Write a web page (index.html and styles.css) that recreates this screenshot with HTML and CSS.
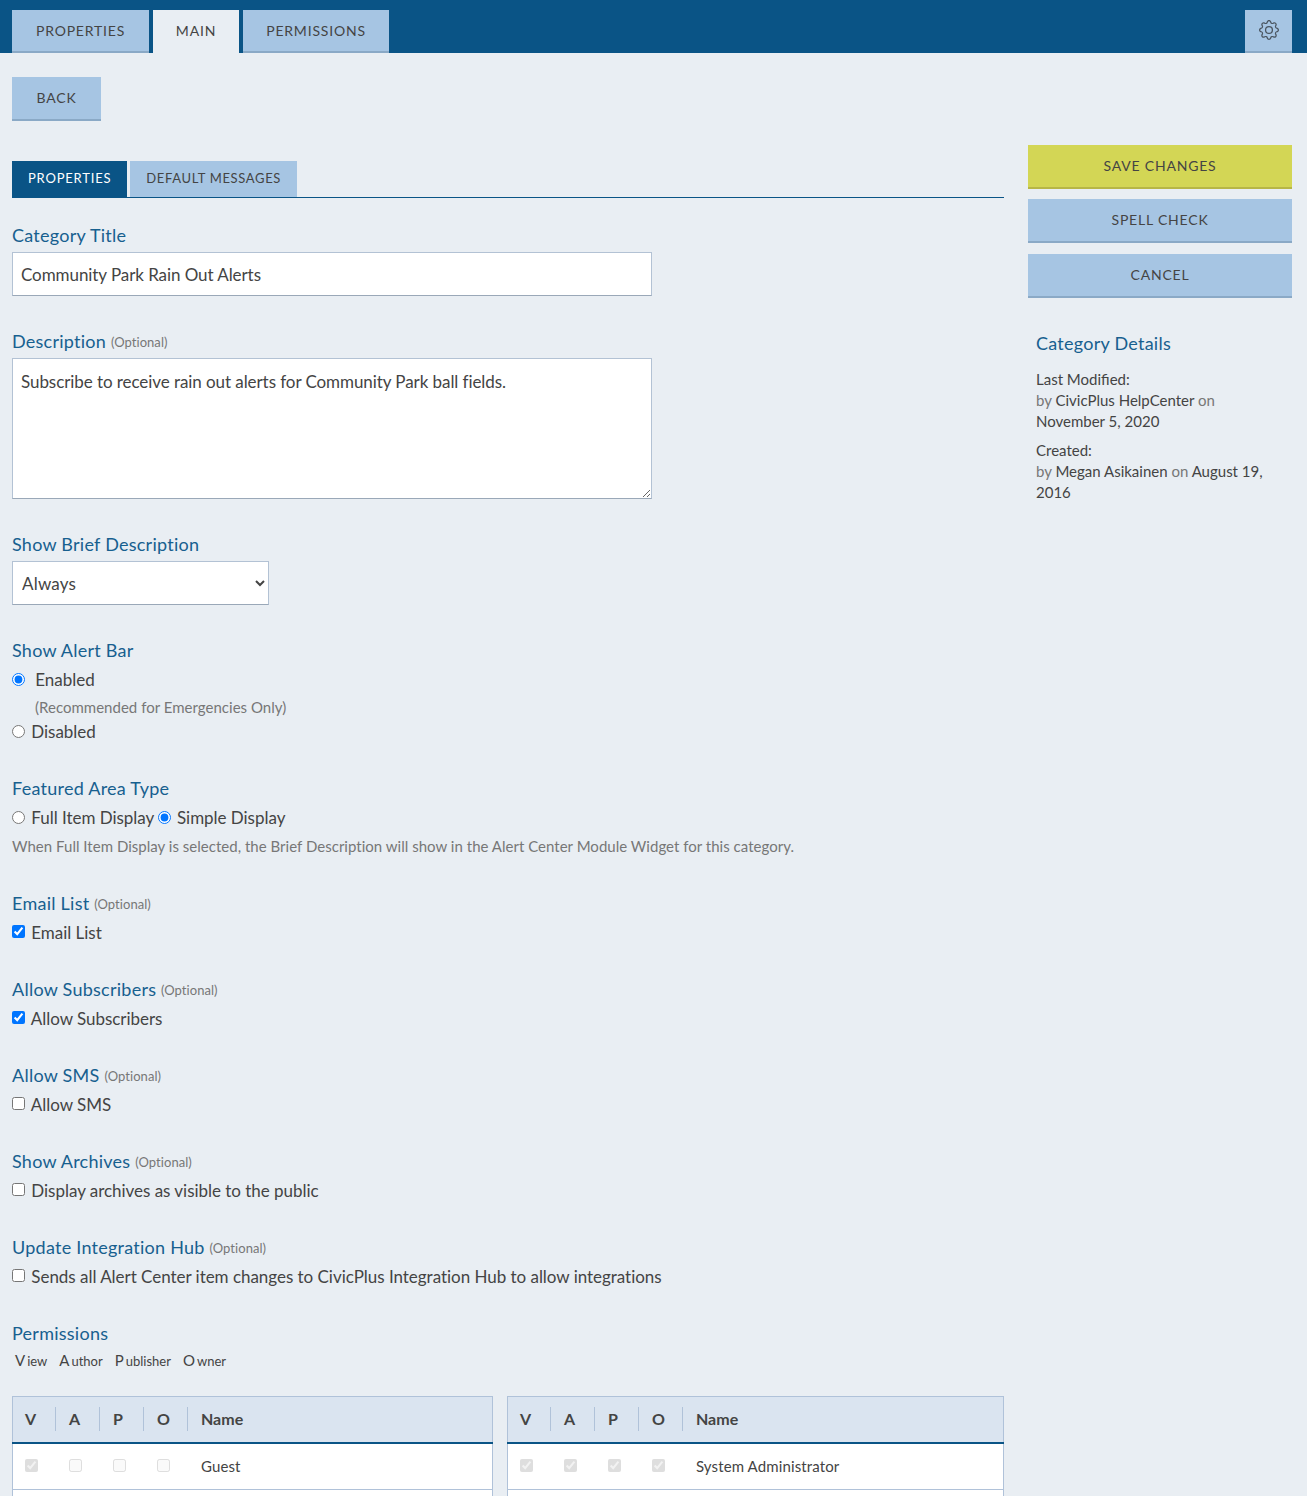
FILE: index.html
```html
<!DOCTYPE html>
<html lang="en">
<head>
    <meta charset="UTF-8">
    <meta name="viewport" content="width=device-width, initial-scale=1.0">
    <title>Alert Center Category</title>
    <link rel="stylesheet" href="styles.css">
</head>
<body>
    <header class="top-bar">
        <nav class="top-tabs">
            <a class="btn top-tab tab-properties">Properties</a>
            <a class="btn top-tab tab-main active">Main</a>
            <a class="btn top-tab tab-permissions">Permissions</a>
        </nav>
        <a class="btn settings-btn">
            <svg width="20" height="20" viewBox="0 0 16 16" fill="#4a5560">
                <path d="M8 4.754a3.246 3.246 0 1 0 0 6.492 3.246 3.246 0 0 0 0-6.492zM5.754 8a2.246 2.246 0 1 1 4.492 0 2.246 2.246 0 0 1-4.492 0z"/>
                <path d="M9.796 1.343c-.527-1.79-3.065-1.79-3.592 0l-.094.319a.873.873 0 0 1-1.255.52l-.292-.16c-1.64-.892-3.433.902-2.54 2.541l.159.292a.873.873 0 0 1-.52 1.255l-.319.094c-1.79.527-1.79 3.065 0 3.592l.319.094a.873.873 0 0 1 .52 1.255l-.16.292c-.892 1.64.901 3.434 2.541 2.54l.292-.159a.873.873 0 0 1 1.255.52l.094.319c.527 1.79 3.065 1.79 3.592 0l.094-.319a.873.873 0 0 1 1.255-.52l.292.16c1.64.893 3.434-.902 2.54-2.541l-.159-.292a.873.873 0 0 1 .52-1.255l.319-.094c1.79-.527 1.79-3.065 0-3.592l-.319-.094a.873.873 0 0 1-.52-1.255l.16-.292c.893-1.64-.902-3.433-2.541-2.54l-.292.159a.873.873 0 0 1-1.255-.52l-.094-.319zm-2.633.283c.246-.835 1.428-.835 1.674 0l.094.319a1.873 1.873 0 0 0 2.693 1.115l.291-.16c.764-.415 1.6.42 1.184 1.185l-.159.292a1.873 1.873 0 0 0 1.116 2.692l.318.094c.835.246.835 1.428 0 1.674l-.319.094a1.873 1.873 0 0 0-1.115 2.693l.16.291c.415.764-.42 1.6-1.185 1.184l-.291-.159a1.873 1.873 0 0 0-2.693 1.116l-.094.318c-.246.835-1.428.835-1.674 0l-.094-.319a1.873 1.873 0 0 0-2.692-1.115l-.292.16c-.764.415-1.6-.42-1.184-1.185l.159-.291A1.873 1.873 0 0 0 1.945 8.93l-.319-.094c-.835-.246-.835-1.428 0-1.674l.319-.094A1.873 1.873 0 0 0 3.06 4.377l-.16-.292c-.415-.764.42-1.6 1.185-1.184l.292.159a1.873 1.873 0 0 0 2.692-1.115l.094-.319z"/>
            </svg>
        </a>
    </header>

    <div class="page">
        <a class="btn back-btn">Back</a>

        <div class="columns">
            <main class="form-col">
                <div class="sub-tabs">
                    <a class="sub-tab active">Properties</a>
                    <a class="sub-tab">Default Messages</a>
                </div>

                <form>
                    <div class="field">
                        <label class="field-label" for="title">Category Title</label>
                        <input class="text-input" type="text" id="title" value="Community Park Rain Out Alerts">
                    </div>

                    <div class="field">
                        <label class="field-label" for="description">Description <small>(Optional)</small></label>
                        <textarea class="text-area" id="description">Subscribe to receive rain out alerts for Community Park ball fields.</textarea>
                    </div>

                    <div class="field">
                        <label class="field-label" for="brief">Show Brief Description</label>
                        <select class="select-input" id="brief">
                            <option>Always</option>
                            <option>Never</option>
                        </select>
                    </div>

                    <div class="field group">
                        <div class="field-label">Show Alert Bar</div>
                        <label class="choice enabled-choice"><input type="radio" name="alertbar" checked> Enabled</label>
                        <div class="note rec-note">(Recommended for Emergencies Only)</div>
                        <label class="choice"><input type="radio" name="alertbar"> Disabled</label>
                    </div>

                    <div class="field group">
                        <div class="field-label">Featured Area Type</div>
                        <label class="choice"><input type="radio" name="area"> Full Item Display</label>
                        <label class="choice"><input type="radio" name="area" checked> Simple Display</label>
                        <div class="note area-note">When Full Item Display is selected, the Brief Description will show in the Alert Center Module Widget for this category.</div>
                    </div>

                    <div class="field group">
                        <div class="field-label">Email List <small>(Optional)</small></div>
                        <label class="choice"><input type="checkbox" checked> Email List</label>
                    </div>

                    <div class="field group">
                        <div class="field-label">Allow Subscribers <small>(Optional)</small></div>
                        <label class="choice"><input type="checkbox" checked> Allow Subscribers</label>
                    </div>

                    <div class="field group">
                        <div class="field-label">Allow SMS <small>(Optional)</small></div>
                        <label class="choice"><input type="checkbox"> Allow SMS</label>
                    </div>

                    <div class="field group">
                        <div class="field-label">Show Archives <small>(Optional)</small></div>
                        <label class="choice"><input type="checkbox"> Display archives as visible to the public</label>
                    </div>

                    <div class="field group">
                        <div class="field-label">Update Integration Hub <small>(Optional)</small></div>
                        <label class="choice"><input type="checkbox"> Sends all Alert Center item changes to CivicPlus Integration Hub to allow integrations</label>
                    </div>

                    <div class="field-label">Permissions</div>
                    <div class="legend">
                        <span><b>V</b>iew</span>
                        <span><b>A</b>uthor</span>
                        <span><b>P</b>ublisher</span>
                        <span><b>O</b>wner</span>
                    </div>

                    <div class="perm-tables">
                        <table class="perm-table">
                            <thead>
                                <tr><th><span>V</span></th><th><span>A</span></th><th><span>P</span></th><th><span>O</span></th><th>Name</th></tr>
                            </thead>
                            <tbody>
                                <tr>
                                    <td><input type="checkbox" checked disabled></td>
                                    <td><input type="checkbox" disabled></td>
                                    <td><input type="checkbox" disabled></td>
                                    <td><input type="checkbox" disabled></td>
                                    <td>Guest</td>
                                </tr>
                                <tr class="next-row"><td colspan="5"></td></tr>
                            </tbody>
                        </table>
                        <table class="perm-table">
                            <thead>
                                <tr><th><span>V</span></th><th><span>A</span></th><th><span>P</span></th><th><span>O</span></th><th>Name</th></tr>
                            </thead>
                            <tbody>
                                <tr>
                                    <td><input type="checkbox" checked disabled></td>
                                    <td><input type="checkbox" checked disabled></td>
                                    <td><input type="checkbox" checked disabled></td>
                                    <td><input type="checkbox" checked disabled></td>
                                    <td>System Administrator</td>
                                </tr>
                                <tr class="next-row"><td colspan="5"></td></tr>
                            </tbody>
                        </table>
                    </div>
                </form>
            </main>

            <aside class="side-col">
                <a class="btn side-btn save-btn">Save Changes</a>
                <a class="btn side-btn spell-btn">Spell Check</a>
                <a class="btn side-btn">Cancel</a>

                <div class="details">
                    <h2>Category Details</h2>
                    <p>Last Modified:<br><i>by</i> CivicPlus HelpCenter <i>on</i><br>November 5, 2020</p>
                    <p>Created:<br><i>by</i> Megan Asikainen <i>on</i> August 19,<br>2016</p>
                </div>
            </aside>
        </div>
    </div>
</body>
</html>
```

FILE: styles.css
```css
html, body {
    height: 1496px;
    overflow: hidden;
}
body {
    margin: 0;
    background: #e9eef3;
    color: #444;
    font-family: Lato, "Liberation Sans", sans-serif;
    font-size: 17px;
}
a {
    cursor: pointer;
}

/* buttons */
.btn {
    display: flex;
    align-items: center;
    justify-content: center;
    box-sizing: border-box;
    padding-bottom: 1px;
    background: #a6c5e3;
    border-bottom: 2px solid #8aa9c6;
    color: #444;
    font-size: 14px;
    letter-spacing: .8px;
    text-transform: uppercase;
}

/* top bar */
.top-bar {
    display: flex;
    justify-content: space-between;
    align-items: flex-end;
    height: 53px;
    padding: 0 15px 0 12px;
    background: #0a5486;
}
.top-tabs {
    display: flex;
    gap: 4px;
}
.top-tab {
    height: 43px;
}
.tab-properties { width: 137px; }
.tab-main { width: 86px; }
.tab-permissions { width: 146px; }
.top-tab.active {
    background: #e9eef3;
    border-bottom-color: #e9eef3;
}
.settings-btn {
    width: 47px;
    height: 43px;
}

.page {
    padding: 24px 15px 0 12px;
}
.back-btn {
    width: 89px;
    height: 44px;
}
.columns {
    display: flex;
    gap: 24px;
    margin-top: 24px;
}
.form-col {
    width: 992px;
    padding-top: 16px;
}
.side-col {
    width: 264px;
}

/* sub tabs */
.sub-tabs {
    display: flex;
    gap: 3px;
    height: 36px;
    margin-bottom: 26px;
    border-bottom: 1px solid #0a5486;
}
.sub-tab {
    display: flex;
    align-items: center;
    padding: 0 16px 2px;
    background: #a6c5e3;
    color: #444;
    font-size: 13px;
    letter-spacing: .65px;
    text-transform: uppercase;
}
.sub-tab.active {
    background: #0a5486;
    color: #fff;
    letter-spacing: .8px;
}

/* form fields */
.field {
    margin-bottom: 34px;
}
.field.group {
    margin-bottom: 33px;
}
.field-label {
    display: block;
    height: 24px;
    margin-bottom: 4px;
    color: #17608f;
    font-size: 18px;
    letter-spacing: .25px;
    line-height: 22px;
}
.field-label small {
    color: #777;
    font-size: 13px;
    letter-spacing: .05px;
    vertical-align: 1px;
}
.text-input,
.text-area,
.select-input {
    display: block;
    box-sizing: border-box;
    border: 1px solid #b3c2d4;
    border-bottom-color: #9aa8b8;
    border-radius: 0;
    background: #fff;
    color: #444;
    font-family: inherit;
    font-size: 17px;
    letter-spacing: -.07px;
}
.text-input {
    width: 640px;
    height: 44px;
    padding: 0 8px;
}
.text-area {
    width: 640px;
    height: 141px;
    padding: 12px 8px;
}
.select-input {
    width: 257px;
    height: 44px;
    padding: 0 5px;
    letter-spacing: .2px;
}
.choice {
    display: inline-block;
    height: 24px;
    margin-top: 1px;
    letter-spacing: -.03px;
    line-height: 24px;
}
.choice + .choice {
    margin-left: -1px;
}
.choice input {
    width: 13px;
    height: 13px;
    margin: 0 2px 0 0;
}
.choice input[type="radio"] {
    vertical-align: 0;
}
.choice input[type="checkbox"] {
    vertical-align: 1px;
}
.enabled-choice input[type="radio"] {
    margin-right: 6px;
}
.note {
    padding-bottom: 2px;
    color: #777;
    font-size: 15px;
    letter-spacing: .02px;
    line-height: 22px;
}
.rec-note {
    margin: 4px 0 0 23px;
}
.area-note {
    margin-top: 5px;
}
.group > .choice + .note + .choice {
    display: block;
    margin-top: 0;
}

/* permissions */
.legend {
    display: flex;
    gap: 12px;
    height: 24px;
    margin-bottom: 22px;
    padding-left: 3px;
    font-size: 13px;
    line-height: 20px;
}
.legend b {
    margin-right: 2px;
    font-size: 15px;
    font-weight: 400;
}
.perm-tables {
    display: grid;
    grid-template-columns: 481px 497px;
    gap: 14px;
}
.perm-table {
    width: 100%;
    border-collapse: collapse;
    border: 1px solid #b0c2d9;
    background: #fff;
}
.perm-table th {
    height: 43px;
    padding: 0 0 2px 12px;
    border-bottom: 2px solid #0a5486;
    background: #dae4f0;
    font-size: 16px;
    font-weight: 700;
    text-align: left;
}
.perm-table th:nth-child(-n+4),
.perm-table td:nth-child(-n+4) {
    width: 32px;
}
.perm-table th span {
    display: block;
    height: 24px;
    margin-right: 1px;
    border-right: 1px solid #b0c2d9;
    line-height: 24px;
}
.perm-table td {
    height: 43px;
    padding: 0 0 2px 12px;
    border-bottom: 1px solid #b0c2d9;
    font-size: 15px;
    letter-spacing: .12px;
}
.perm-table td input {
    display: block;
    width: 13px;
    height: 13px;
    margin: 0;
    opacity: .7;
}
.next-row td {
    height: 46px;
}

/* side column */
.side-btn {
    height: 44px;
    margin-bottom: 10px;
}
.spell-btn {
    margin-bottom: 11px;
}
.save-btn {
    background: #d3d655;
    border-bottom-color: #b7b646;
}
.details {
    margin-top: 33px;
    padding: 0 8px;
    font-size: 15px;
    line-height: 21px;
}
.details h2 {
    margin: 0 0 14px;
    color: #17608f;
    font-size: 18px;
    font-weight: 400;
    letter-spacing: .25px;
    line-height: 24px;
}
.details p {
    margin: 0 0 8px;
}
.details i {
    color: #777;
    font-style: normal;
}
```
